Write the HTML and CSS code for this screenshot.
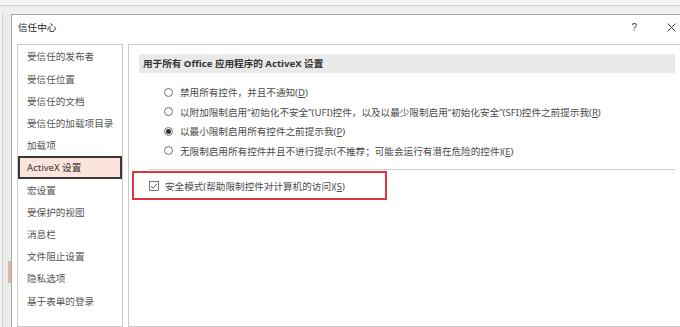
FILE: index.html
```html
<!DOCTYPE html>
<html lang="zh-CN">
<head>
    <meta charset="UTF-8">
    <title>信任中心</title>
    <link rel="stylesheet" href="styles.css">
</head>
<body>
    <div class="ribbon-top"></div>
    <div class="ribbon-band"></div>
    <div class="stage">
        <div class="sheet-edge">
            <div class="col-a"></div>
            <div class="col-b"><div class="cell-mark"></div></div>
        </div>
        <div class="dialog">
            <div class="titlebar">
                <span class="title">信任中心</span>
                <span class="help">?</span>
                <span class="close">
                    <svg width="9" height="9" viewBox="0 0 9 9">
                        <path d="M0.5 0.5 L8.5 8.5 M8.5 0.5 L0.5 8.5" stroke="#3a3a3a" stroke-width="1" fill="none"/>
                    </svg>
                </span>
            </div>
            <div class="dialog-body">
                <ul class="nav">
                    <li>受信任的发布者</li>
                    <li>受信任位置</li>
                    <li>受信任的文档</li>
                    <li>受信任的加载项目录</li>
                    <li>加载项</li>
                    <li class="active">ActiveX 设置</li>
                    <li>宏设置</li>
                    <li>受保护的视图</li>
                    <li>消息栏</li>
                    <li>文件阻止设置</li>
                    <li>隐私选项</li>
                    <li>基于表单的登录</li>
                </ul>
                <div class="content">
                    <div class="group-head">用于所有 Office 应用程序的 ActiveX 设置</div>
                    <div class="options">
                        <div class="option"><span class="radio"></span><span>禁用所有控件，并且不通知(<u>D</u>)</span></div>
                        <div class="option"><span class="radio"></span><span>以附加限制启用“初始化不安全”(UFI)控件，以及以最少限制启用“初始化安全”(SFI)控件之前提示我(<u>R</u>)</span></div>
                        <div class="option"><span class="radio on"></span><span>以最小限制启用所有控件之前提示我(<u>P</u>)</span></div>
                        <div class="option"><span class="radio"></span><span>无限制启用所有控件并且不进行提示(不推荐；可能会运行有潜在危险的控件)(<u>E</u>)</span></div>
                    </div>
                    <div class="divider"></div>
                    <div class="safe-box">
                        <span class="check">
                            <svg width="8" height="8" viewBox="0 0 8 8">
                                <path d="M1 4.2 L3 6.2 L7 1.8" stroke="#555" stroke-width="1" fill="none"/>
                            </svg>
                        </span>
                        <span>安全模式(帮助限制控件对计算机的访问)(<u>S</u>)</span>
                    </div>
                </div>
            </div>
        </div>
    </div>
</body>
</html>
```

FILE: styles.css
```css
body {
    margin: 0;
    width: 680px;
    height: 327px;
    overflow: hidden;
    background: #f0f0f0;
    font-family: "Noto Sans", "Noto Sans CJK SC", sans-serif;
    font-size: 9.6px;
    color: #444;
}
.ribbon-top {
    height: 5px;
    background: #f5f5f5;
    border-bottom: 1px solid #d4d4d4;
}
.ribbon-band {
    height: 8px;
    background: #efefef;
}
.stage {
    display: flex;
    height: 313px;
}
.sheet-edge {
    width: 11px;
    display: flex;
}
.col-a {
    width: 2px;
    background: #f4f4f4;
    border-right: 1px solid #cdcdcd;
}
.col-b {
    flex: 1;
    background: #ececec;
    display: flex;
    flex-direction: column;
    align-items: flex-end;
}
.cell-mark {
    margin-top: 247px;
    width: 3px;
    height: 22px;
    background: #e3b39c;
}
.dialog {
    flex: 1;
    background: #fff;
    border-left: 1px solid #a9a9a9;
    border-top: 1px solid #a9a9a9;
    display: flex;
    flex-direction: column;
}
.titlebar {
    height: 31px;
    box-sizing: border-box;
    display: flex;
    align-items: center;
    padding: 0 4px 5px 6px;
    color: #222;
}
.title {
    font-size: 9.6px;
}
.help {
    margin-left: auto;
    margin-right: 30px;
    font-family: "Liberation Sans", sans-serif;
    font-size: 10px;
    color: #444;
}
.close {
    display: flex;
    width: 9px;
    height: 9px;
}
.dialog-body {
    display: flex;
    gap: 5px;
    padding-left: 5px;
    height: 300px;
}
.nav {
    list-style: none;
    margin: 0;
    padding: 0;
    width: 106px;
    box-sizing: border-box;
    border: 1px solid #cbcbcb;
}
.nav li {
    height: 22.2px;
    line-height: 20.2px;
    padding: 2px 0 0 9px;
    color: #555;
    white-space: nowrap;
    box-sizing: border-box;
}
.nav li.active {
    background: #fce3db;
    border: 2px solid #383838;
    line-height: 16.2px;
    padding-left: 7px;
    color: #333;
}
.content {
    flex: 1;
    border: 1px solid #cbcbcb;
    border-right: none;
    padding: 9px 0 0 10px;
}
.group-head {
    width: 536px;
    height: 19px;
    box-sizing: border-box;
    line-height: 19px;
    padding: 1px 0 0 4px;
    line-height: 18px;
    background: #e9e9e9;
    font-weight: bold;
    color: #333;
}
.options {
    margin: 9.3px 0 0 25px;
}
.option {
    display: flex;
    align-items: center;
    gap: 7px;
    height: 19.4px;
    white-space: nowrap;
    color: #4a4a4a;
}
.radio {
    width: 9px;
    height: 9px;
    box-sizing: border-box;
    border: 1px solid #707070;
    border-radius: 50%;
    display: flex;
    align-items: center;
    justify-content: center;
}
.radio.on::after {
    content: "";
    width: 5px;
    height: 5px;
    border-radius: 50%;
    background: #333;
}
.divider {
    width: 526px;
    height: 1px;
    background: #cfcfcf;
    margin: 9.1px 0 0 10px;
}
.safe-box {
    margin: 1px 0 0 -7px;
    width: 255px;
    height: 29px;
    box-sizing: border-box;
    border: 2px solid #e2343f;
    display: flex;
    align-items: center;
    gap: 6px;
    padding-left: 15px;
    white-space: nowrap;
    color: #4a4a4a;
}
.check {
    width: 10px;
    height: 10px;
    box-sizing: border-box;
    border: 1px solid #7a7a7a;
    display: flex;
    align-items: center;
    justify-content: center;
}
```
